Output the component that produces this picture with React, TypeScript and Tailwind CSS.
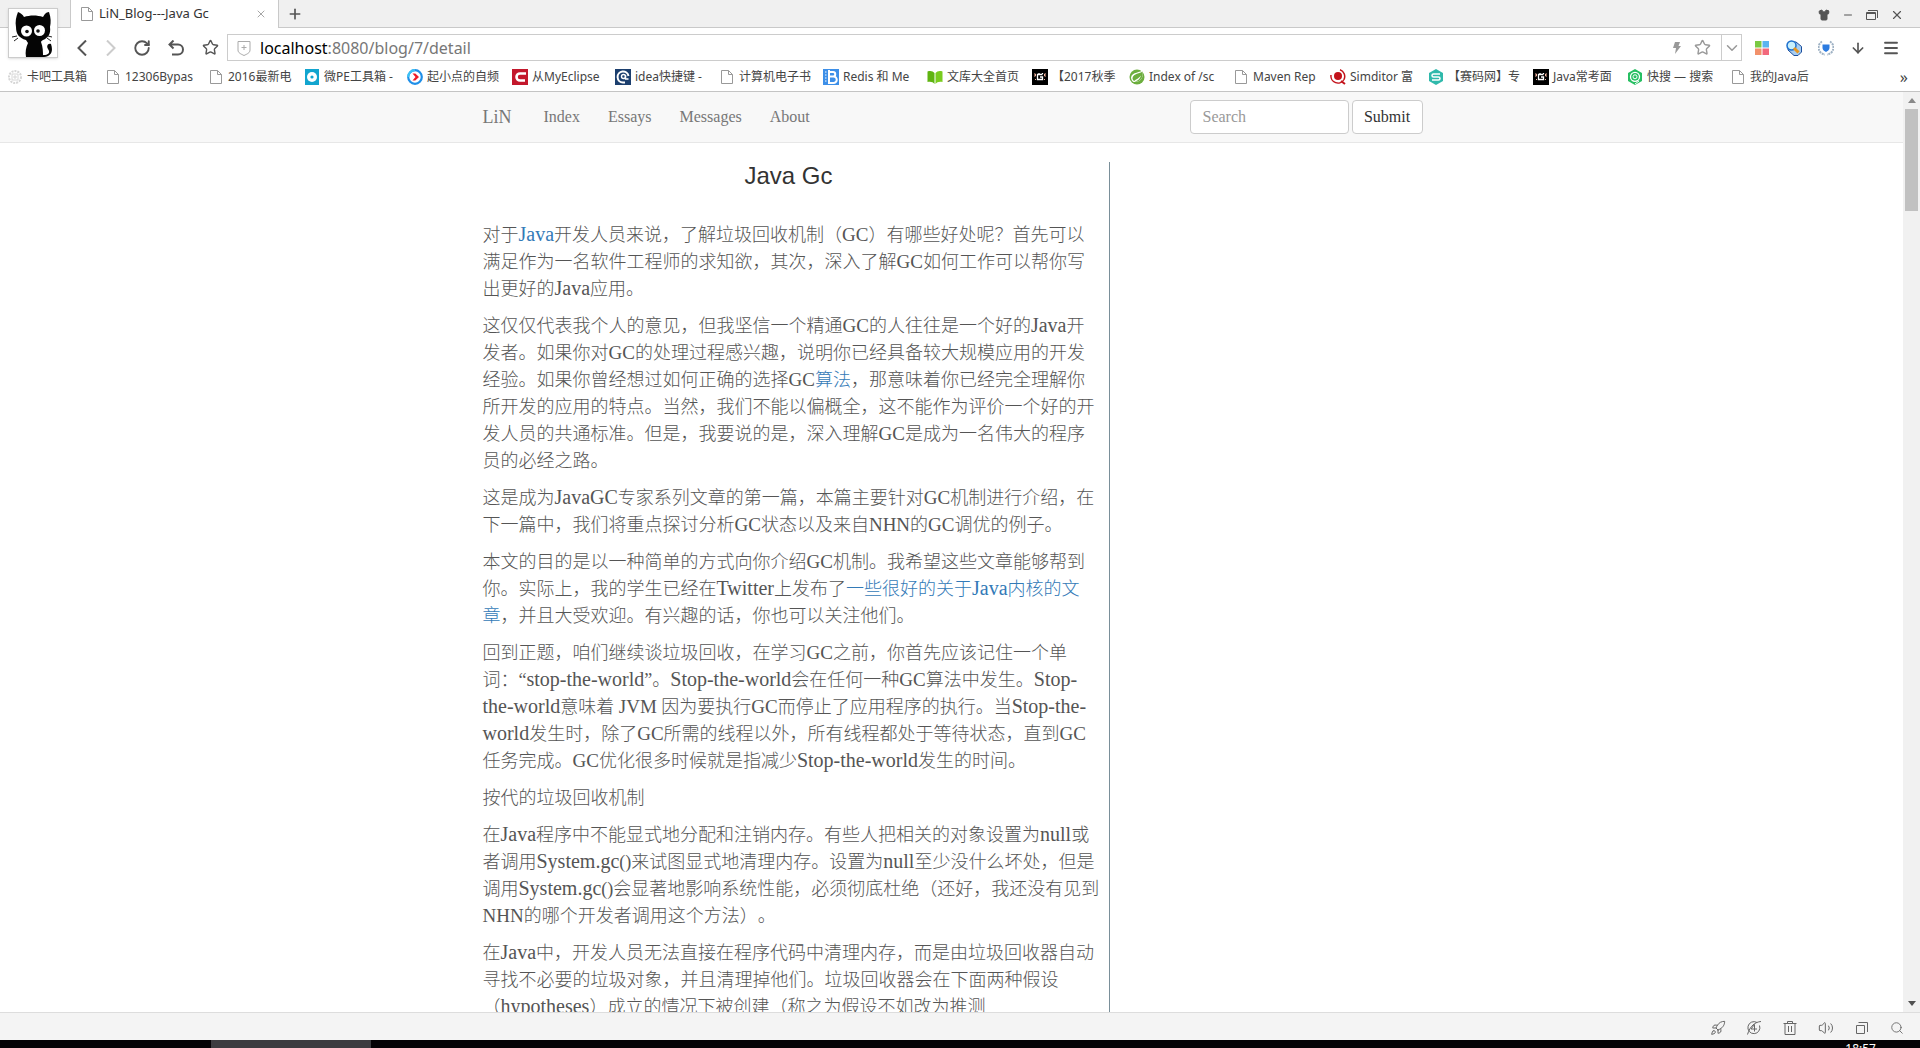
import React from "react";
import { Shirt, Minus, X, Plus, ChevronLeft, ChevronRight, ChevronDown, RotateCw, Undo2, Star, ArrowDown, Menu, Rocket, Trash2, Volume2, Search } from "lucide-react";

const box = "block size-4 shrink-0";

function Page() {
  return (
    <svg viewBox="0 0 16 16" className={box} fill="none" stroke="#999">
      <path d="M2.5 1.5h7l4 4v9h-11zM9.5 1.5v4h4" />
    </svg>
  );
}

function Chip() {
  return (
    <svg viewBox="0 0 16 16" className={box} fill="none" stroke="#d6d6d6">
      <circle cx="8" cy="8" r="6" strokeDasharray="2 1" strokeWidth="2" />
      <path d="M5 5h6v6H5zM7 7h2v2H7z" />
    </svg>
  );
}

function Disc() {
  return (
    <svg viewBox="0 0 16 16" className={box}>
      <rect x="1" width="14" height="16" fill="#12a5cf" />
      <circle cx="8" cy="8" r="5" fill="#fff" />
      <circle cx="8" cy="8" r="1.6" fill="#12a5cf" />
    </svg>
  );
}

function Play() {
  return (
    <svg viewBox="0 0 16 16" className={box} fill="none">
      <circle cx="8" cy="8" r="6.8" stroke="#1f8fe8" strokeWidth="2.2" />
      <path d="M8 1.2a6.8 6.8 0 0 0-6.8 6.8" stroke="#3cc4f5" strokeWidth="2.2" />
      <path d="M5.5 4.5l3 3.5-3 3.5h2.8L12 8 8.3 4.5z" fill="#ee1c25" />
    </svg>
  );
}

function RedC() {
  return (
    <svg viewBox="0 0 16 16" className={box} fill="none">
      <rect width="16" height="16" fill="#c3182c" />
      <path d="M14 4.500H8a3.500 3.500 0 0 0 0 7h5" stroke="#fff" strokeWidth="2.600" />
    </svg>
  );
}

function NavyC() {
  return (
    <svg viewBox="0 0 16 16" className={box} fill="none">
      <rect width="16" height="16" fill="#1c3f6e" />
      <path d="M13.500 7A5.500 5.500 0 1 0 8 13.500h2" stroke="#fff" strokeWidth="2" />
      <circle cx="8.500" cy="7.500" r="2" stroke="#fff" strokeWidth="1.400" />
      <path d="M10.500 6v4h3" stroke="#fff" strokeWidth="1.400" />
    </svg>
  );
}

function BlueB() {
  return (
    <svg viewBox="0 0 16 16" className={box} fill="none">
      <rect width="16" height="16" fill="#3d8fe8" />
      <path d="M2 3h1.500M2 6h1.500M2 9h1.500M2 12h1.500" stroke="#fff" />
      <path d="M6 1v13h4.500a3 3 0 0 0 0-6.500H6M6 3h4a2.200 2.200 0 0 1 0 4.500" stroke="#fff" strokeWidth="2" />
    </svg>
  );
}

function Book() {
  return (
    <svg viewBox="0 0 16 16" className={box}>
      <path d="M.5 2.500C4 1.500 6 2.500 7.500 4v11C6 13 4 12.500.5 13z" fill="#5fb411" />
      <path d="M15.500 2.500C12 1.500 10 2.500 8.500 4v11c1.500-2 3.500-2.500 7-2z" fill="#79cc1e" />
    </svg>
  );
}

function DarkG() {
  return (
    <svg viewBox="0 0 16 16" className={box} fill="none">
      <rect width="16" height="16" fill="#000" />
      <path d="M10.500 5.500h-5v5h5V8H8M7 4v1M10.500 4v1" stroke="#fff" strokeWidth="1.300" />
      <path d="M2 5h1.500v2H2M3 10.500h1M14 5h-1.500v2H14M12 10.500h1" stroke="#f3b5a0" />
    </svg>
  );
}

function Leaf() {
  return (
    <svg viewBox="0 0 16 16" className={box}>
      <circle cx="8" cy="8" r="7.500" fill="#6cae3e" />
      <path d="M13.800 1C12 4 3 2.500 2 8.500c.2 2 1 3.500 2.500 4.500C9 13.500 15.500 11 13.800 1z" fill="#fff" />
      <path d="M13.500 2.500C11 5 4.500 4 3.500 9c0 1.500.8 2.500 1.700 3C7 10 10 9.500 12 6.500 10.500 11 8 12 5.500 12.500 11 13.500 15 8.500 13.500 2.500z" fill="#6cae3e" />
    </svg>
  );
}

function Bullseye() {
  return (
    <svg viewBox="0 0 16 16" className={box} fill="none">
      <circle cx="8" cy="7" r="4" fill="#c3121b" />
      <path d="M1 6a7 7 0 0 0 13 4.500A7 7 0 0 0 10 .8" stroke="#c3121b" strokeWidth="1.500" />
      <path d="M11 12l4 3" stroke="#c3121b" strokeWidth="2" />
    </svg>
  );
}

function TealS() {
  return (
    <svg viewBox="0 0 16 16" className={box} fill="none">
      <path d="M8 0l7 4v8l-7 4-7-4V4z" fill="#2fb9ab" />
      <path d="M12 5H5.500a1.500 1.500 0 0 0 0 3h5a1.500 1.500 0 0 1 0 3H4" stroke="#fff" strokeWidth="1.500" />
    </svg>
  );
}

function GreenQ() {
  return (
    <svg viewBox="0 0 16 16" className={box} fill="none">
      <path d="M8 0l7 4v8l-7 4-7-4V4z" fill="#27bf62" />
      <circle cx="8" cy="7.800" r="4.500" stroke="#fff" strokeWidth="1.300" />
      <circle cx="8" cy="7.800" r="2" stroke="#fff" />
      <path d="M8 15l4-3" stroke="#fff" />
    </svg>
  );
}

function Cat() {
  return (
    <svg viewBox="0 0 48 48" className="block size-12">
      <path d="M9 3c3 1 5 3 6 5 6-2 13-2 19 0 1-2 3-5 6-5 2 6 2 10 1 15 1 7-2 11-7 13-1 1-2 1-2 2 2 5 2 10 2 15H17c-1-5 0-10 2-14l-2-3C10 29 7 25 7 18 6 13 7 8 9 3z" fill="#050505" />
      <path d="M30 46c9 1 12-2 9-6-2-3 0-6 3-5 3 9-1 14-12 13z" fill="#050505" />
      <path d="M8 27l-5 1M9 29l-4 3M39 27l4 1M38 29l4 3" stroke="#222" />
      <circle cx="17.500" cy="22" r="5.500" fill="#fff" />
      <circle cx="30.500" cy="21.500" r="5.500" fill="#fff" />
      <circle cx="18" cy="22.500" r="1.800" fill="#111" />
      <circle cx="29" cy="22" r="1.800" fill="#111" />
    </svg>
  );
}

const bookmarks: [React.FC, string, string][] = [
  [Chip, "卡吧工具箱", "w-[98px]"],
  [Page, "12306Bypas", "w-[103px]"],
  [Page, "2016最新电", "w-[96px]"],
  [Disc, "微PE工具箱 -", "w-[103px]"],
  [Play, "起小点的自频", "w-[105px]"],
  [RedC, "从MyEclipse", "w-[103px]"],
  [NavyC, "idea快捷键 -", "w-[104px]"],
  [Page, "计算机电子书", "w-[104px]"],
  [BlueB, "Redis 和 Me", "w-[104px]"],
  [Book, "文库大全首页", "w-[105px]"],
  [DarkG, "【2017秋季", "w-[97px]"],
  [Leaf, "Index of /sc", "w-[104px]"],
  [Page, "Maven Rep", "w-[97px]"],
  [Bullseye, "Simditor 富", "w-[98px]"],
  [TealS, "【赛码网】专", "w-[105px]"],
  [DarkG, "Java常考面", "w-[94px]"],
  [GreenQ, "快搜 — 搜索", "w-[103px]"],
  [Page, "我的Java后", "w-[96px]"],
];

const paragraphs: string[][] = [
  [
    "对于[Java]开发人员来说，了解垃圾回收机制（GC）有哪些好处呢？首先可以",
    "满足作为一名软件工程师的求知欲，其次，深入了解GC如何工作可以帮你写",
    "出更好的Java应用。",
  ],
  [
    "这仅仅代表我个人的意见，但我坚信一个精通GC的人往往是一个好的Java开",
    "发者。如果你对GC的处理过程感兴趣，说明你已经具备较大规模应用的开发",
    "经验。如果你曾经想过如何正确的选择GC[算法]，那意味着你已经完全理解你",
    "所开发的应用的特点。当然，我们不能以偏概全，这不能作为评价一个好的开",
    "发人员的共通标准。但是，我要说的是，深入理解GC是成为一名伟大的程序",
    "员的必经之路。",
  ],
  [
    "这是成为JavaGC专家系列文章的第一篇，本篇主要针对GC机制进行介绍，在",
    "下一篇中，我们将重点探讨分析GC状态以及来自NHN的GC调优的例子。",
  ],
  [
    "本文的目的是以一种简单的方式向你介绍GC机制。我希望这些文章能够帮到",
    "你。实际上，我的学生已经在Twitter上发布了[一些很好的关于Java内核的文]",
    "[章]，并且大受欢迎。有兴趣的话，你也可以关注他们。",
  ],
  [
    "回到正题，咱们继续谈垃圾回收，在学习GC之前，你首先应该记住一个单",
    "词：“stop-the-world”。Stop-the-world会在任何一种GC算法中发生。Stop-",
    "the-world意味着 JVM 因为要执行GC而停止了应用程序的执行。当Stop-the-",
    "world发生时，除了GC所需的线程以外，所有线程都处于等待状态，直到GC",
    "任务完成。GC优化很多时候就是指减少Stop-the-world发生的时间。",
  ],
  ["按代的垃圾回收机制"],
  [
    "在Java程序中不能显式地分配和注销内存。有些人把相关的对象设置为null或",
    "者调用System.gc()来试图显式地清理内存。设置为null至少没什么坏处，但是",
    "调用System.gc()会显著地影响系统性能，必须彻底杜绝（还好，我还没有见到",
    "NHN的哪个开发者调用这个方法）。",
  ],
  [
    "在Java中，开发人员无法直接在程序代码中清理内存，而是由垃圾回收器自动",
    "寻找不必要的垃圾对象，并且清理掉他们。垃圾回收器会在下面两种假设",
    "（hypotheses）成立的情况下被创建（称之为假设不如改为推测",
  ],
];

function Mixed({ text }: { text: string }) {
  return (
    <>
      {text.split(/([A-Za-z.-]+)/).map((part, i) =>
        i % 2 ? (
          <span key={i} className={/^[A-Z]+$/.test(part) ? "text-[19px] leading-none" : "text-[20px] leading-none"}>{part}</span>
        ) : (
          part
        ),
      )}
    </>
  );
}

function Line({ text }: { text: string }) {
  return (
    <>
      {text.split(/[[\]]/).map((part, i) =>
        i % 2 ? (
          <a key={i} href="#" className="text-[#337ab7]"><Mixed text={part} /></a>
        ) : (
          <Mixed key={i} text={part} />
        ),
      )}
    </>
  );
}

export default function App() {
  return (
    <div className="flex h-screen flex-col overflow-hidden bg-white font-['Noto_Sans','Noto_Sans_CJK_SC',sans-serif] text-[12px] text-[#444] [text-spacing-trim:space-all]">
      <header className="relative shrink-0 border-b border-[#c4c4c4]">
        <div className="flex h-7 items-stretch border-b border-[#c9c9c9] bg-[#f0f0f0] pl-[70px]">
          <div className="z-10 -mb-px flex w-[209px] items-center border-x border-[#c9c9c9] bg-white pr-[11px] pl-2">
            <Page />
            <span className="ml-1 flex-1 text-[13px] text-[#333]">LiN_Blog---Java Gc</span>
            <button aria-label="Close tab"><X size={12} strokeWidth={1.5} color="#888" /></button>
          </div>
          <button aria-label="New tab" className="ml-2"><Plus size={16} strokeWidth={2.5} color="#555" /></button>
          <div className="ml-auto flex items-center gap-3 pt-0.5 pr-4 text-[#555]">
            <button aria-label="Skin"><Shirt size={12} fill="#555" /></button>
            <button aria-label="Minimize"><Minus size={12} strokeWidth={2} /></button>
            <button aria-label="Restore">
              <svg viewBox="0 0 12 12" className="block size-3" fill="none" stroke="#555">
                <path d="M.5 3.500h9v7h-9zM.5 4.500h9M2 1.500h9.500V9" />
              </svg>
            </button>
            <button aria-label="Close window"><X size={14} strokeWidth={2} /></button>
          </div>
        </div>
        <div className="absolute top-2 left-2 border border-[#ccc] bg-white shadow"><Cat /></div>
        <div className="flex h-[39px] items-center pr-5 pl-[67px] text-[#555]">
          <div className="flex items-center">
            <button aria-label="Back" className="flex w-[30px] justify-center">
              <svg viewBox="0 0 10 16" className="block h-4 w-2.5" fill="none" stroke="#555" strokeWidth="2"><path d="M9 .5L1.500 8 9 15.500" /></svg>
            </button>
            <button aria-label="Forward" className="flex w-[28px] justify-center">
              <svg viewBox="0 0 10 16" className="block h-4 w-2.5" fill="none" stroke="#ccc" strokeWidth="2"><path d="M1 .5L8.500 8 1 15.500" /></svg>
            </button>
            <button aria-label="Reload" className="flex w-[34px] justify-center"><RotateCw size={18} strokeWidth={2.5} /></button>
            <button aria-label="Undo" className="flex w-[34px] justify-center">
              <svg viewBox="0 0 16 16" className="block size-4" fill="none" stroke="#555" strokeWidth="2"><path d="M5.500.5L1.500 4.500l4 4M2 4.500h8a5 5 0 0 1 0 10H4" /></svg>
            </button>
            <button aria-label="Favorite" className="flex w-[34px] justify-center"><Star size={17} strokeWidth={2} /></button>
          </div>
          <div className="flex h-[27px] flex-1 items-center border border-[#ccc]">
            <svg viewBox="0 0 16 16" className="ml-2 block size-4" fill="none" stroke="#aaa">
              <path d="M2 1.500h12V10c0 3-3 4-6 5.500C5 14 2 13 2 10zM8 5v5M5.500 7.500h5" />
            </svg>
            <div role="textbox" aria-label="Address" className="ml-2 flex-1 text-[16px] text-[#777]"><span className="text-black">localhost</span>:8080/blog/7/detail</div>
            <svg viewBox="0 0 10 14" className="mr-3 block h-3.5 w-2.5" fill="#999"><path d="M3 1h5L6.500 5H9L3 13l1-6H1z" /></svg>
            <Star size={17} color="#999" />
            <button aria-label="Address history" className="ml-2.5 flex h-full w-5 items-center justify-center border-l border-[#ccc]"><ChevronDown size={18} strokeWidth={2} color="#999" /></button>
          </div>
          <div className="ml-3 flex items-center gap-4">
            <svg viewBox="0 0 16 16" className={box}>
              <path d="M1 1h6.500v6.500H1z" fill="#7ac943" /><path d="M8.500 1H15v6.500H8.500z" fill="#5ab4f0" />
              <path d="M1 8.500h6.500V15H1z" fill="#f2916b" /><path d="M8.500 8.500H15V15H8.500z" fill="#f2687c" />
            </svg>
            <svg viewBox="0 0 16 16" className={box}>
              <path d="M3 2h7l5.500 4.500V12L12 15.500H8L2 10z" fill="#a8cdf0" stroke="#1c4e9c" />
              <circle cx="5.500" cy="5.500" r="4.500" fill="#c8f0fc" stroke="#1d6fce" strokeWidth="1.500" />
              <path d="M8 8l4.500 4.500" stroke="#e8961e" strokeWidth="3" />
            </svg>
            <svg viewBox="0 0 16 16" className={box} fill="none">
              <path d="M4 1.500a7 7 0 0 0 3 13M12 1.500a7 7 0 0 1-3 13" stroke="#9fb2c4" strokeWidth="2" strokeDasharray="2 .8" />
              <path d="M4.500 4.500h7V8c0 2-2 3-3.500 4C6.500 11 4.500 10 4.500 8z" fill="#2c7be0" />
            </svg>
            <button aria-label="Downloads"><ArrowDown size={16} strokeWidth={2.5} /></button>
            <button aria-label="Menu"><Menu size={18} strokeWidth={2.5} /></button>
          </div>
        </div>
        <nav aria-label="Bookmarks" className="flex h-6 items-start pt-0.5 pl-[7px]">
          {bookmarks.map(([Icon, label, width]) => (
            <a key={label} href="#" className={"flex h-4 shrink-0 items-center gap-1 whitespace-nowrap " + width}>
              <Icon />
              {label}
            </a>
          ))}
          <button aria-label="More bookmarks" className="mr-3 ml-auto text-[16px] leading-4">»</button>
        </nav>
      </header>

      <div className="flex min-h-0 flex-1">
        <main className="flex min-w-0 flex-1 flex-col overflow-hidden font-['Liberation_Serif','Noto_Sans_CJK_SC',serif]">
          <nav aria-label="Site" className="shrink-0 border-b border-[#e7e7e7] bg-[#f8f8f8]">
            <div className="mx-auto flex h-[50px] w-full max-w-[970px] items-center pr-[14px] pl-4 text-[16px] text-[#777]">
              <a href="#" className="mr-8 text-[18px]">LiN</a>
              <div className="flex gap-7">
                <a href="#">Index</a>
                <a href="#">Essays</a>
                <a href="#">Messages</a>
                <a href="#">About</a>
              </div>
              <form className="ml-auto flex gap-[3px]">
                <input aria-label="Search" placeholder="Search" className="h-[34px] w-[159px] rounded border border-[#ccc] bg-white px-3 placeholder:text-[#999]" />
                <button type="button" className="h-[34px] w-[71px] rounded border border-[#ccc] bg-white text-[#333]">Submit</button>
              </form>
            </div>
          </nav>
          <div className="mx-auto mt-[19px] flex min-h-0 w-full max-w-[970px] flex-1">
            <article className="w-[643px] shrink-0 overflow-hidden border-r border-[#7a8f99] pr-[14px] pl-4">
              <h1 className="mb-8 text-center font-['Liberation_Sans',sans-serif] text-[24px] leading-[28px] text-[#333]">Java Gc</h1>
              {paragraphs.map((lines, i) => (
                <p key={i} className="mb-2.5 text-[18px] leading-[27px] font-light whitespace-nowrap text-[#555]">
                  {lines.map((line, j) => (
                    <React.Fragment key={j}>
                      {j > 0 && <br />}
                      <Line text={line} />
                    </React.Fragment>
                  ))}
                </p>
              ))}
            </article>
          </div>
        </main>
        <div className="flex w-[17px] shrink-0 flex-col items-center bg-[#f1f1f1] py-1.5">
          <svg viewBox="0 0 8 5" className="block h-[5px] w-2" fill="#888"><path d="M4 0l4 5H0z" /></svg>
          <div className="mt-1.5 h-[102px] w-[13px] bg-[#c1c1c1]" />
          <svg viewBox="0 0 8 5" className="mt-auto block h-[5px] w-2" fill="#505050"><path d="M0 0h8L4 5z" /></svg>
        </div>
      </div>

      <footer className="shrink-0">
        <div className="flex h-7 items-center justify-end gap-5 border-t border-[#ddd] bg-[#f4f4f4] pt-0.5 pr-4 text-[#666]">
          <button aria-label="Boost"><Rocket size={16} strokeWidth={1.5} /></button>
          <button aria-label="Speed mode">
            <svg viewBox="0 0 16 16" className="block size-4" fill="none" stroke="#666">
              <path d="M15 1.500C9 2 4 6 1.500 14.500M11 2.500a6 6 0 1 0 2.500 3M8.500 4.500v7M8.500 4.500L5 9h6" />
            </svg>
          </button>
          <button aria-label="Clean">
            <svg viewBox="0 0 16 16" className="block size-4" fill="none" stroke="#666">
              <path d="M1.500 3.500h13M5.500 3V1.500h5V3M3 4v10.500h10V4M6.500 6v6M9.500 6v6" />
            </svg>
          </button>
          <button aria-label="Sound"><Volume2 size={16} strokeWidth={1.5} /></button>
          <button aria-label="Windows">
            <svg viewBox="0 0 16 16" className="block size-4" fill="none" stroke="#666">
              <path d="M2.500 5.500h8v8h-8zM4.500 2.500h9V12" />
            </svg>
          </button>
          <button aria-label="Find"><Search size={14} strokeWidth={1.5} /></button>
        </div>
        <div className="flex h-2 overflow-hidden bg-[#050306] pl-[211px]">
          <div className="w-40 bg-[#3c3c40]" />
          <span className="mr-11 ml-auto text-[12px] leading-[18px] text-white">18:57</span>
        </div>
      </footer>
    </div>
  );
}
